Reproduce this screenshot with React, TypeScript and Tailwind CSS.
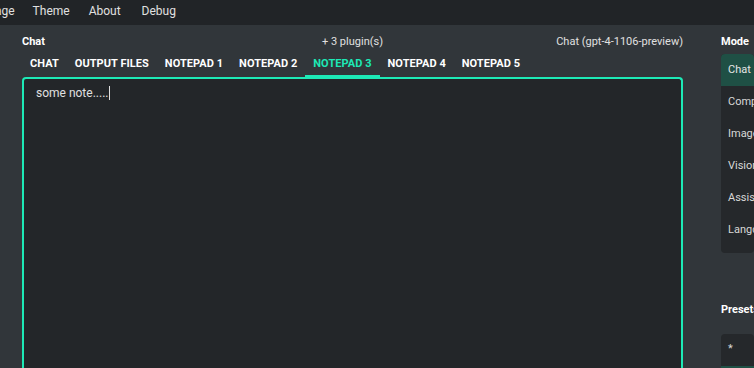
import React from "react";

const font = { fontFamily: "Roboto, 'Noto Sans', sans-serif" };

export default function App() {
  const tabs = ["CHAT", "OUTPUT FILES", "NOTEPAD 1", "NOTEPAD 2", "NOTEPAD 3", "NOTEPAD 4", "NOTEPAD 5"];
  const modes = ["Chat", "Completion", "Image", "Vision", "Assistant", "Langchain"];
  return (
    <div className="w-[754px] h-[368px] overflow-hidden bg-[#31363a] text-[#e6e6e6] flex flex-col" style={font}>
      <div className="h-[25px] shrink-0 bg-[#212427] flex items-center pb-[3px] text-[12px] text-[#e0e0e0] overflow-hidden">
        <div className="flex items-center ml-[-38px] gap-[18px] whitespace-nowrap">
          <span>Language</span>
          <span>Theme</span>
          <span className="ml-[1px]">About</span>
          <span className="ml-[3px]">Debug</span>
        </div>
      </div>
      <div className="flex flex-1 min-h-0">
        <div className="w-[661px] ml-[22px] shrink-0 flex flex-col">
          <div className="h-[28px] shrink-0 pt-[7px] grid grid-cols-3 items-center text-[11px]">
            <span className="font-bold text-white">Chat</span>
            <span className="text-center text-[#e0e0e0]">+ 3 plugin(s)</span>
            <span className="text-right text-[#e0e0e0]">Chat (gpt-4-1106-preview)</span>
          </div>
          <div className="flex h-[24px] shrink-0 items-stretch">
            {tabs.map((t) => (
              <div
                key={t}
                className={
                  "px-2 flex items-center text-[11px] tracking-[0.05px] font-bold border-b-[2px] " +
                  (t === "NOTEPAD 3" ? "text-[#1de9b6] border-[#1de9b6]" : "text-white border-transparent")
                }
              >
                {t}
              </div>
            ))}
          </div>
          <div className="flex-1 border-2 border-[#1de9b6] rounded-[4px] border-b-0 rounded-b-none bg-[#232629] px-[12px] pt-[5px] text-[12px] text-[#e0e0e0]">
            <span>some note.....</span>
            <span className="inline-block w-px h-[14px] bg-[#e0e0e0] align-middle ml-[1px] -mt-[2px]" />
          </div>
        </div>
        <div className="ml-[38px] flex-1 flex flex-col overflow-hidden">
          <div className="h-[28px] shrink-0 pt-[7px] flex items-center text-[11px] font-bold text-white">Mode</div>
          <div className="mt-[1px] shrink-0 bg-[#25282b] rounded-[4px] pb-[7px] overflow-hidden">
            {modes.map((m, i) => (
              <div
                key={m}
                className={"h-[32px] flex items-center pl-[7px] text-[11px] whitespace-nowrap " + (i === 0 ? "bg-[#1f5045] text-[#e6e6e6]" : "text-[#d8d8d8]")}
              >
                {m}
              </div>
            ))}
          </div>
          <div className="mt-[49px] shrink-0 h-[16px] flex items-center text-[11px] font-bold text-white">Presets</div>
          <div className="mt-[16px] shrink-0 bg-[#25282b] rounded-t-[4px] h-[40px] flex flex-col">
            <div className="h-[32px] shrink-0 flex items-center pl-[7px] pb-[2px] text-[11px] text-[#d8d8d8]">*</div>
            <div className="flex-1 bg-[#1f5045]" />
          </div>
        </div>
      </div>
    </div>
  );
}
